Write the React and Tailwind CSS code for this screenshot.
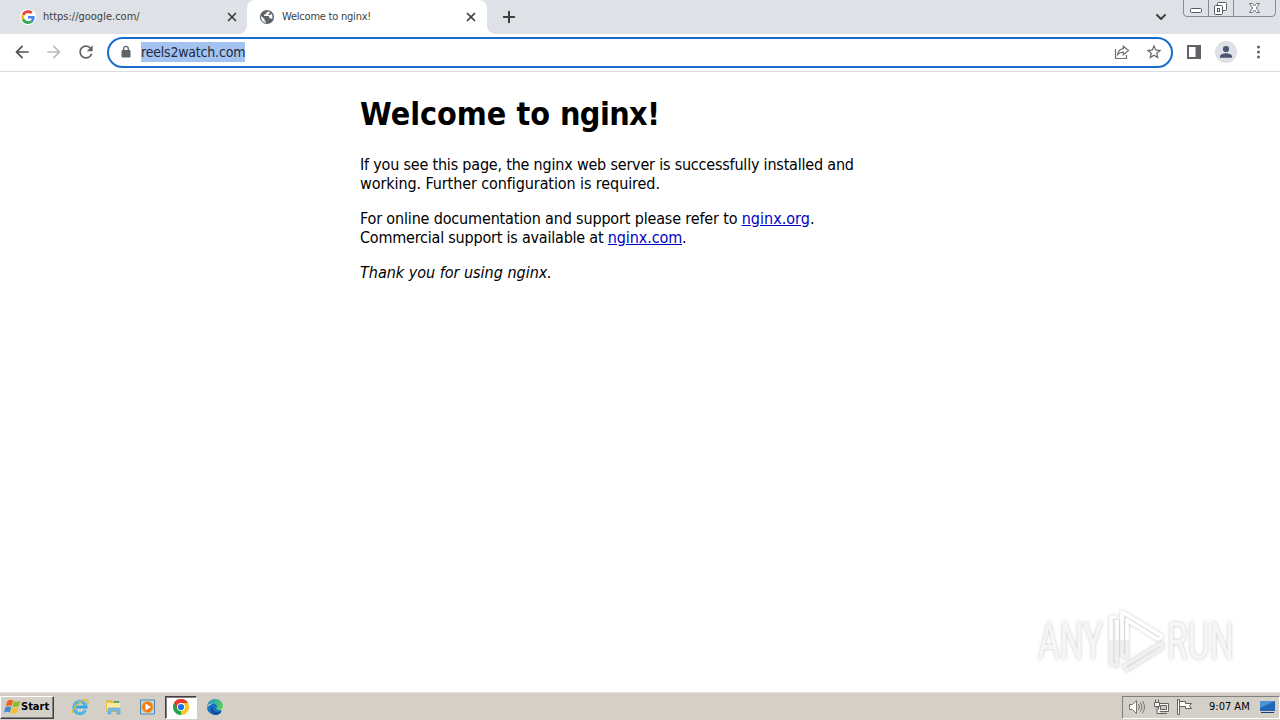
import React from 'react';
import { ChevronDown, Plus, X } from 'lucide-react';

const GoogleIcon = () => (
  <svg className="w-4 h-4" viewBox="0 0 48 48">
    <circle cx="24" cy="24" r="24" fill="#fff" />
    <g transform="translate(3.5 3.5) scale(.86)">
      <path fill="#EA4335" d="M24 9.5c3.54 0 6.71 1.22 9.21 3.6l6.85-6.85C35.9 2.38 30.47 0 24 0 14.62 0 6.51 5.38 2.56 13.22l7.98 6.19C12.43 13.72 17.74 9.5 24 9.5z" />
      <path fill="#4285F4" d="M46.98 24.55c0-1.57-.15-3.09-.38-4.55H24v9.02h12.94c-.58 2.96-2.26 5.48-4.78 7.18l7.73 6c4.51-4.18 7.09-10.36 7.09-17.65z" />
      <path fill="#FBBC05" d="M10.53 28.59c-.48-1.45-.76-2.99-.76-4.59s.27-3.14.76-4.59l-7.98-6.19C.92 16.46 0 20.12 0 24c0 3.88.92 7.54 2.56 10.78l7.97-6.19z" />
      <path fill="#34A853" d="M24 48c6.48 0 11.93-2.13 15.89-5.81l-7.73-6c-2.15 1.45-4.92 2.3-8.16 2.3-6.26 0-11.57-4.22-13.47-9.91l-7.98 6.19C6.51 42.62 14.62 48 24 48z" />
    </g>
  </svg>
);

const GlobeIcon = () => (
  <svg className="w-4 h-4" viewBox="0 0 16 16">
    <circle cx="8" cy="8" r="7.1" fill="#5f6368" />
    <path fill="#fff" d="M9 2.1c-.2 1.2-.8 1.9-2.1 1.9v1.5H5.1v1.6h4.3c.6 0 .9.4.9 1v1.2h1.4c.7 0 1.1.4 1.4 1 .9-2.9.1-4.6-1-5.9-.1 1-.6 1.5-1.5 1.5H9.3V4.6h1.5V3.2z" />
    <path fill="#fff" d="M2.2 7l3.4 3.3v.9c0 .8.6 1.3 1.3 1.3v1.3C3.7 13.3 1.6 10.6 2.2 7z" />
  </svg>
);

const ToolIcon = ({ d, color = '#5f6368' }) => (
  <svg className="w-5 h-5" viewBox="0 0 24 24">
    <path fill={color} d={d} />
  </svg>
);

const TabStrip = () => (
  <div className="flex h-[34px] bg-[#dee1e6] text-[11px] text-[#3c4043]">
    <div className="flex w-[247px] items-center pl-5">
      <GoogleIcon />
      <span className="ml-[7px] w-[182px]">https://google.com/</span>
      <X className="w-[14px] h-[14px] text-[#3c4043]" strokeWidth={3} />
    </div>
    <div className="relative flex w-[240px] items-center rounded-t-lg bg-white pl-3">
      <span className="absolute bottom-0 -left-2 h-2 w-2 bg-[radial-gradient(circle_at_0_0,#dee1e6_7.5px,#fff_8px)]" />
      <span className="absolute bottom-0 -right-2 h-2 w-2 bg-[radial-gradient(circle_at_100%_0,#dee1e6_7.5px,#fff_8px)]" />
      <GlobeIcon />
      <span className="ml-[7px] w-[182px] tracking-[-0.22px]">Welcome to nginx!</span>
      <X className="w-[14px] h-[14px]" strokeWidth={3} />
    </div>
    <div className="flex w-[666px] items-center pl-[13px]">
      <Plus className="w-[18px] h-[18px]" strokeWidth={2.7} />
    </div>
    <div className="flex w-[30px] items-center">
      <ChevronDown className="w-4 h-4" strokeWidth={3} />
    </div>
    <div className="h-[17px] w-[93px]">
      <svg className="h-[17px] w-[93px]" viewBox="0 0 93 17" fill="none">
        <path d="M.5 0v13q0 3.5 3.5 3.5h85q3.5 0 3.5-3.5V0" stroke="#858b94" />
        <path d="M25.5 0v16M50.5 0v16" stroke="#858b94" />
        <rect x="7.5" y="8.5" width="11" height="4" rx="1" fill="#fff" stroke="#555b65" />
        <rect x="34.5" y="2.5" width="9" height="8" rx="1" fill="#fff" stroke="#555b65" />
        <rect x="31.5" y="5.5" width="8" height="9" rx="1" fill="#fff" stroke="#555b65" />
        <rect x="34.5" y="8.5" width="2" height="3" stroke="#555b65" />
        <path d="M66.5 3.5h3l2 2.5 2-2.5h3L73.3 8l3.2 4.5h-3l-2-2.5-2 2.5h-3L69.7 8z" fill="#fff" stroke="#6b717a" />
      </svg>
    </div>
  </div>
);

const Toolbar = () => (
  <div className="flex h-[38px] items-center border-b border-[#dadce0] bg-white pb-px pl-3">
    <ToolIcon d="M20 11H7.83l5.59-5.59L12 4l-8 8 8 8 1.41-1.41L7.83 13H20v-2z" color="#4d5156" />
    <div className="ml-3">
      <ToolIcon d="M12 4l-1.41 1.41L16.17 11H4v2h12.17l-5.58 5.59L12 20l8-8z" color="#b8babd" />
    </div>
    <div className="ml-3">
      <ToolIcon d="M17.65 6.35C16.2 4.9 14.21 4 12 4c-4.42 0-7.99 3.58-7.99 8s3.57 8 7.99 8c3.73 0 6.84-2.55 7.73-6h-2.08c-.82 2.33-3.04 4-5.65 4-3.31 0-6-2.69-6-6s2.69-6 6-6c1.66 0 3.14.69 4.22 1.78L13 11h7V4l-2.35 2.35z" />
    </div>
    <div className="mt-px ml-[11px] flex h-[31px] w-[1066px] items-center rounded-full border-2 border-[#1a6dce] pb-px pl-[11px]">
      <svg className="h-[14px] w-[12px]" viewBox="0 0 12 14">
        <rect x="1.5" y="5" width="9" height="7.5" rx="1" fill="#5f6368" />
        <path d="M3.7 5.5V3.6a2.3 2.3 0 0 1 4.6 0v1.9" fill="none" stroke="#5f6368" strokeWidth="1.3" />
      </svg>
      <span className="ml-[9px] h-5 w-[104px] whitespace-nowrap bg-[#a4c3f1] text-[14px] leading-5 tracking-[-0.2px] text-[#202b40]">reels2watch.com</span>
      <div className="ml-[868px] flex items-center gap-[14px]">
        <svg className="w-[18px] h-[18px]" viewBox="0 0 18 18" fill="none" stroke="#6a6e73" strokeWidth="1.2">
          <path d="M2.5 6v9.5h11V12M10.3 3.2l5.2 4.3-5.2 4.3V9.2c-2.5 0-4.2.6-5.7 2.4.5-3.3 2.2-5.6 5.7-6z" />
        </svg>
        <svg className="w-[18px] h-[18px]" viewBox="0 0 24 24">
          <path fill="#5f6368" d="M22 9.24l-7.19-.62L12 2 9.19 8.63 2 9.24l5.46 4.73L5.82 21 12 17.27 18.18 21l-1.63-7.03L22 9.24zM12 15.4l-3.76 2.27 1-4.28-3.32-2.88 4.38-.38L12 6.1l1.71 4.04 4.38.38-3.32 2.88 1 4.28L12 15.4z" />
        </svg>
      </div>
    </div>
    <svg className="ml-[14px] h-[14px] w-[14px]" viewBox="0 0 14 14">
      <path fill="#5f6368" d="M0 0h14v14H0zM2 2v10h6.500V2z" fillRule="evenodd" />
    </svg>
    <svg className="ml-[14px] h-[22px] w-[22px]" viewBox="0 0 22 22">
      <circle cx="11" cy="11" r="11" fill="#dee1e6" />
      <circle cx="11" cy="8" r="3.1" fill="#4a5570" />
      <path d="M5 16.8v-1.5c0-2 4-3 6-3s6 1 6 3v1.5z" fill="#4a5570" />
    </svg>
    <svg className="ml-[14px] h-[18px] w-[16px]" viewBox="0 0 16 18" fill="#5f6368">
      <circle cx="7.5" cy="4" r="1.5" />
      <circle cx="7.5" cy="9" r="1.5" />
      <circle cx="7.5" cy="14" r="1.5" />
    </svg>
  </div>
);

const Watermark = () => (
  <svg className="absolute bottom-[18px] right-[36px] h-[68px] w-[212px]" viewBox="0 0 212 68">
    <defs>
      <linearGradient id="fade" x1="0" y1="0" x2="0" y2="68" gradientUnits="userSpaceOnUse">
        <stop offset=".49" stopColor="#fff" />
        <stop offset=".5" stopColor="#f0f0f0" />
      </linearGradient>
      <filter id="glow" x="-10%" y="-10%" width="120%" height="120%">
        <feDropShadow dx="0" dy="0" stdDeviation="1.7" floodColor="#777" floodOpacity=".45" />
      </filter>
    </defs>
    <g filter="url(#glow)" fill="url(#fade)">
      <g fontFamily="Roboto, sans-serif" fontSize="52" fontWeight="400">
        <text transform="translate(6 53) scale(.64 1)" fill="#f6f6f6">ANY</text>
        <text transform="translate(135 53) scale(.65 1)" fill="#f6f6f6">RUN</text>
      </g>
      <g fill="none" stroke="url(#fade)" strokeWidth="3.5" strokeLinejoin="round">
        <path d="M84 10l-5 2v46l6 2V14" />
        <path d="M90 50V6l40 24-3 4-32-20v37z" />
        <path d="M130 37L92 60l3 4 35-22z" />
      </g>
    </g>
  </svg>
);

const Page = () => (
  <div className="relative h-[620px] bg-white pt-[23px] pl-[360px] text-black">
    <h1 className="h-[38px] whitespace-nowrap text-[32px] font-bold leading-[38px]">
      Welcome to <span className="tracking-[-0.6px]">nginx!</span>
    </h1>
    <div className="mt-[22px] whitespace-nowrap text-[16px] leading-[19px]">
      <p>
        <span className="block tracking-[-0.2px]">If you see this page, the nginx web server is successfully installed and</span>
        <span className="block tracking-[-0.09px]">working. Further configuration is required.</span>
      </p>
      <p className="mt-4">
        <span className="block tracking-[-0.16px]">For online documentation and support please refer to <a className="tracking-[0.02px] text-[#0000c8] underline">nginx.org</a>.</span>
        <span className="block tracking-[-0.21px]">Commercial support is available at <a className="tracking-[-0.1px] text-[#0000c8] underline">nginx.com</a>.</span>
      </p>
      <p className="mt-4"><em className="tracking-[-0.01px]">Thank you for using nginx.</em></p>
    </div>
    <Watermark />
  </div>
);

const WindowsIcon = () => (
  <svg className="h-[16px] w-[17px]" viewBox="0 0 17 16">
    <path d="M3.5 1.8q3-2 5.7-.4L7.6 7Q4.5 5.8 1.7 7.2z" fill="#ee6322" />
    <path d="M10 2q2.900 1.400 6.500-.2L14.800 7.300q-3.400 1.400-6.400.1z" fill="#8dbd2e" />
    <path d="M1.4 8.3q2.900-1.500 5.900-.1L5.800 13.500q-2.900-1.300-6 .1z" fill="#3e8ed0" />
    <path d="M8.1 8.6q3.100 1.200 6.400-.1L13 13.800q-3.200 1.400-6.300.1z" fill="#fbbb2c" />
  </svg>
);

const Taskbar = () => (
  <div className="flex h-7 items-center border-t border-[#e5e3df] bg-[#d4d0c8] pt-px text-[11px] text-black">
    <div className="flex h-[23px] w-[54px] items-center border border-t-white border-l-white border-r-[#404040] border-b-[#404040] pl-[3px] shadow-[inset_-1px_-1px_#808080]">
      <WindowsIcon />
      <span className="text-[11px] font-bold">Start</span>
    </div>
    <svg className="ml-[17px] h-[18px] w-[18px]" viewBox="0 0 18 18" fill="none">
      <path d="M14.5 12A6 6 0 1 1 15 9H5" stroke="#35a5df" strokeWidth="3" />
      <path d="M14.5 12A6 6 0 1 1 15 8" stroke="#79d0f2" strokeWidth="1" />
      <path d="M1.5 15.5C-.5 11 13-1 16.8 2.2c1 1-.1 2.7-.9 3.8" stroke="#e4b72f" strokeWidth="1.3" />
    </svg>
    <svg className="ml-4 h-[18px] w-[18px]" viewBox="0 0 18 18">
      <path d="M1 2h6l1 1h7v11H1z" fill="#e3bf58" />
      <path d="M2 5h13v8H2z" fill="#fbea9c" />
      <path d="M9 3h5v2H9z" fill="#58a866" />
      <path d="M3 16v-5q0-1 1-1h10q1 0 1 1v5h-3v-3H6v3z" fill="#78bce6" stroke="#4c90bd" strokeWidth=".5" />
    </svg>
    <svg className="ml-4 h-[18px] w-[18px]" viewBox="0 0 18 18">
      <path d="M1.5 2h14v14h-14z" fill="#b9dcf1" stroke="#4b86b7" />
      <circle cx="8.5" cy="9" r="5.8" fill="#ef7d16" stroke="#f9b25b" />
      <path d="M6.5 5.5l5.5 3.5-5.5 3.5z" fill="#fff" />
    </svg>
    <div className="ml-[8px] flex h-[23px] w-[32px] items-center justify-center border border-t-[#404040] border-l-[#404040] border-r-white border-b-white bg-white shadow-[inset_1px_1px_#808080]">
      <svg className="h-4 w-4" viewBox="0 0 16 16">
        <path d="M8 8L1.07 4A8 8 0 0 1 14.93 4z" fill="#e63c2f" />
        <path d="M8 8l6.93-4A8 8 0 0 1 8 16z" fill="#fbc61b" />
        <path d="M8 8v8A8 8 0 0 1 1.07 4z" fill="#23a34b" />
        <path d="M8 4h6.93L11.5 10 8 16l1-6z" fill="#fbc61b" />
        <path d="M8 4h6.93A8 8 0 0 0 1.07 4L4.5 10z" fill="#e63c2f" />
        <circle cx="8" cy="8" r="4" fill="#fff" />
        <circle cx="8" cy="8" r="3.1" fill="#1a73e8" />
      </svg>
    </div>
    <svg className="ml-[9px] h-[18px] w-[18px]" viewBox="0 0 18 18">
      <defs>
        <linearGradient id="edge" x1="0" y1="0" x2="1" y2=".3">
          <stop offset="0" stopColor="#168bd5" />
          <stop offset="1" stopColor="#55cf65" />
        </linearGradient>
      </defs>
      <path d="M1 9a8 8 0 0 0 14.5 4.5L12 9 9 4z" fill="#1474c4" />
      <path d="M1 9C1 4 5 1 9 1c5 0 8 3.5 8 7 0 3-2.5 4-4.5 4-1.8 0-2.5-.7-2.5-1.3 0-.6.8-.8.8-2.2C10.8 6.8 9 5.5 6.5 5.5 3.5 5.5 1.5 7 1 9z" fill="url(#edge)" />
      <path d="M7 8c-1 4 2 7 6.5 6 1-.2 1.5-.5 2-.5C13.5 17 9 18 6.5 15.5S5 9 7 8z" fill="#124f9c" />
      <path d="M10 10.5c.7-.7 1-2 .2-3.3-2-.5-3.3.9-3 2.8.4 2.6 3 4.5 6 4l2.5-1.8c-3 .7-5.7-.5-5.7-1.7z" fill="#1b70bd" />
    </svg>
    <div className="ml-auto flex h-[23px] w-[158px] items-center border border-t-[#808080] border-l-[#808080] border-r-white border-b-white pl-[6px]">
      <svg className="h-4 w-4" viewBox="0 0 16 16" fill="#fff" stroke="#77736e">
        <path d="M.5 5.5h3l4-4v13l-4-4h-3z" />
        <path d="M9.5 5q2 3 0 6M11.5 3.5q3 4.500 0 9M13.5 2q4 6 0 12" fill="none" />
      </svg>
      <svg className="ml-[8px] h-4 w-[17px]" viewBox="0 0 17 16" fill="#f5f5f3" stroke="#65625e">
        <path d="M5.5 4.5h10v8h-10zM8 14.5h6" />
        <path d="M7.5 6.5h6v4h-6z" fill="#cecbc6" />
        <path d="M1.5 3.5h5v4h-5zM2.5 3V.5M5.5 3V.5M4 8v6.5h4" />
      </svg>
      <svg className="ml-[7px] h-4 w-4" viewBox="0 0 16 16" fill="#fff" stroke="#65625e">
        <path d="M2.5 15.5V.5h-2v15z" />
        <path d="M2.5 2.5h6v2h6l-2 2.5 2 2.5h-6v-2h-6z" />
      </svg>
      <span className="ml-4 w-[44px] whitespace-nowrap">9:07 AM</span>
      <svg className="ml-[7px] h-4 w-[15px]" viewBox="0 0 15 16">
        <path d="M0 2h15v10H0z" fill="#2366b7" />
        <path d="M0 2h15L0 9z" fill="#4b91d5" />
        <path d="M1 13h13v1H1z" fill="#173e78" />
      </svg>
    </div>
  </div>
);

export default function App() {
  return (
    <div className="flex h-[720px] w-[1280px] flex-col overflow-hidden bg-white font-['DejaVu_Sans_Condensed','DejaVu_Sans',sans-serif]">
      <TabStrip />
      <Toolbar />
      <Page />
      <Taskbar />
    </div>
  );
}
